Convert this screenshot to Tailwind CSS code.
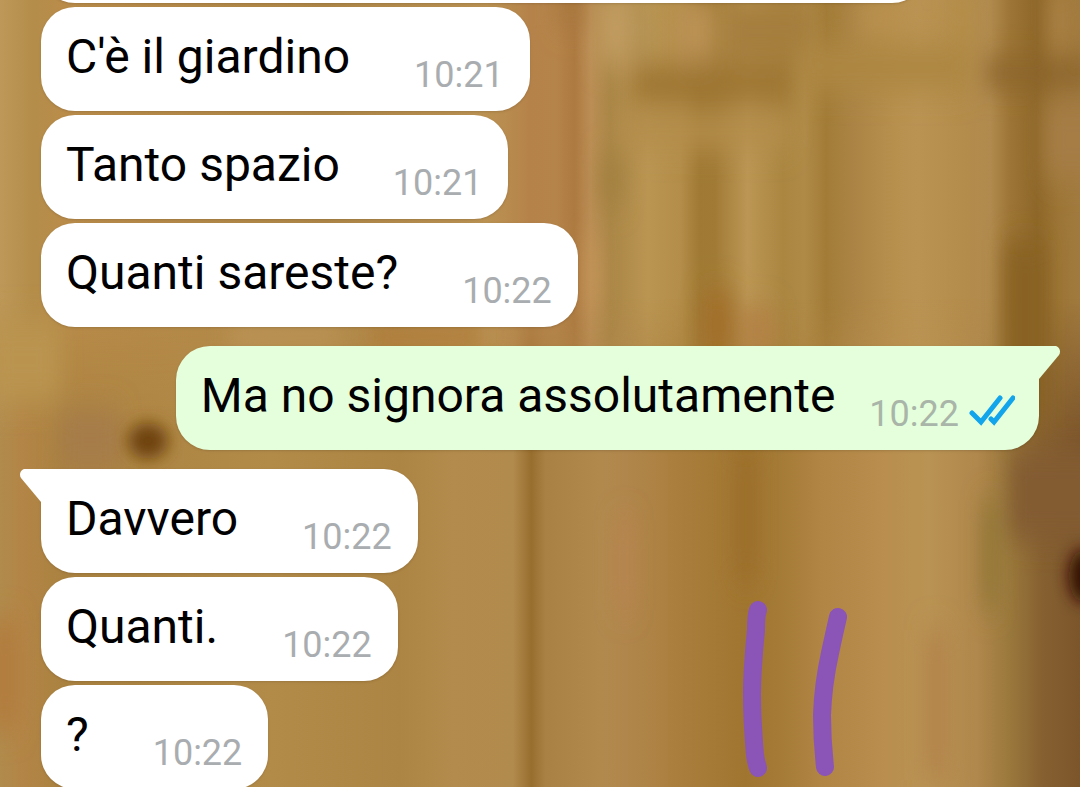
<!DOCTYPE html>
<html lang="it">
  <head>
    <meta charset="UTF-8" />
    <meta name="viewport" content="width=device-width, initial-scale=1.0" />
    <script src="https://cdn.jsdelivr.net/npm/@tailwindcss/browser@4"></script>
    <title>Chat</title>
  </head>
  <body class="bg-[#b28a48] font-[Roboto,sans-serif]">
    <main class="relative isolate h-screen overflow-hidden">
      <!-- wooden wallpaper -->
      <svg
        class="absolute inset-0 -z-10 h-full w-full"
        viewBox="0 0 1080 787"
        preserveAspectRatio="none"
        aria-hidden="true"
      >
        <defs>
          <linearGradient id="planks-top">
            <stop offset="0" stop-color="#bd9858" />
            <stop offset=".03" stop-color="#b48d4a" />
            <stop offset=".06" stop-color="#ba8c4a" />
            <stop offset=".3" stop-color="#b08848" />
            <stop offset=".45" stop-color="#bb9252" />
            <stop offset=".49" stop-color="#b5834a" />
            <stop offset=".515" stop-color="#b5844a" />
            <stop offset=".532" stop-color="#ad7a41" />
            <stop offset=".547" stop-color="#bb8e55" />
            <stop offset=".565" stop-color="#aa8646" />
            <stop offset=".6" stop-color="#ba9552" />
            <stop offset=".63" stop-color="#b38d49" />
            <stop offset=".648" stop-color="#a07a34" />
            <stop offset=".662" stop-color="#a17b36" />
            <stop offset=".692" stop-color="#bb9654" />
            <stop offset=".725" stop-color="#aa8641" />
            <stop offset=".745" stop-color="#af8a47" />
            <stop offset=".765" stop-color="#a27c37" />
            <stop offset=".79" stop-color="#ab8445" />
            <stop offset=".83" stop-color="#b8904e" />
            <stop offset=".85" stop-color="#ba9353" />
            <stop offset=".89" stop-color="#b48c4b" />
            <stop offset=".917" stop-color="#b08a4e" />
            <stop offset=".935" stop-color="#9d7536" />
            <stop offset=".96" stop-color="#8e6729" />
            <stop offset=".98" stop-color="#9c7536" />
            <stop offset="1" stop-color="#a17a3f" />
          </linearGradient>
          <linearGradient id="planks-bottom">
            <stop offset="0" stop-color="#b08b4c" />
            <stop offset=".02" stop-color="#b38546" />
            <stop offset=".06" stop-color="#aa8240" />
            <stop offset=".25" stop-color="#b38b49" />
            <stop offset=".37" stop-color="#ac8443" />
            <stop offset=".42" stop-color="#b38b4c" />
            <stop offset=".475" stop-color="#b18a4d" />
            <stop offset=".492" stop-color="#986e2e" />
            <stop offset=".505" stop-color="#a98144" />
            <stop offset=".555" stop-color="#b1894d" />
            <stop offset=".58" stop-color="#b1864c" />
            <stop offset=".62" stop-color="#ab803f" />
            <stop offset=".69" stop-color="#a07530" />
            <stop offset=".72" stop-color="#a47a36" />
            <stop offset=".76" stop-color="#b18544" />
            <stop offset=".82" stop-color="#b98e4e" />
            <stop offset=".86" stop-color="#b99353" />
            <stop offset=".905" stop-color="#b0874c" />
            <stop offset=".935" stop-color="#9a783c" />
            <stop offset=".965" stop-color="#866030" />
            <stop offset="1" stop-color="#7c552b" />
          </linearGradient>
          <linearGradient id="fade" x2="0" y2="1">
            <stop offset=".38" stop-color="#000" />
            <stop offset=".56" stop-color="#fff" />
          </linearGradient>
          <mask id="lower">
            <rect width="1080" height="787" fill="url(#fade)" />
          </mask>
          <filter id="soft" x="-10%" y="-10%" width="120%" height="120%">
            <feGaussianBlur stdDeviation="10 15" />
          </filter>
          <filter id="knot" x="-10%" y="-50%" width="120%" height="200%">
            <feGaussianBlur stdDeviation="8" />
          </filter>
        </defs>
        <rect width="1080" height="787" fill="url(#planks-top)" />
        <rect width="1080" height="787" fill="url(#planks-bottom)" mask="url(#lower)" />
        <g filter="url(#soft)">
          <rect x="555" y="-10" width="30" height="35" fill="#a8783f" />
          <rect x="598" y="-10" width="34" height="75" fill="#c19b60" />
          <rect x="635" y="0" width="15" height="60" fill="#b09152" />
          <rect x="675" y="0" width="40" height="60" fill="#bb9254" />
          <rect x="725" y="0" width="90" height="60" fill="#a57e3d" />
          <rect x="632" y="65" width="160" height="38" fill="#9d7532" />
          <rect x="620" y="115" width="170" height="32" fill="#b48d4c" />
          <rect x="860" y="5" width="40" height="25" fill="#bb9250" />
          <rect x="800" y="45" width="170" height="45" fill="#ad8743" />
          <rect x="955" y="-10" width="15" height="50" fill="#b48f49" />
          <rect x="985" y="60" width="110" height="26" fill="#8a632a" />
          <rect x="1052" y="-10" width="14" height="60" fill="#b0854c" />
          <rect x="1045" y="100" width="60" height="80" fill="#a57d44" />
          <rect x="600" y="155" width="22" height="50" fill="#a3803f" />
          <rect x="702" y="290" width="30" height="70" fill="#a26f2b" />
          <rect x="740" y="310" width="35" height="40" fill="#b38144" />
          <rect x="370" y="325" width="110" height="22" fill="#ad7836" />
          <rect x="230" y="325" width="110" height="22" fill="#be965a" />
          <rect x="588" y="240" width="10" height="70" fill="#c79759" />
          <rect x="-10" y="320" width="70" height="80" fill="#ba944f" />
          <rect x="60" y="410" width="60" height="60" fill="#a67b4a" />
          <rect x="1005" y="240" width="40" height="190" fill="#886223" />
          <rect x="982" y="500" width="16" height="110" fill="#8f7635" />
          <rect x="1010" y="450" width="90" height="90" fill="#835c31" />
          <rect x="-10" y="620" width="28" height="110" fill="#b27c3c" />
          <rect x="616" y="520" width="16" height="90" fill="#b88450" />
          <rect x="735" y="450" width="22" height="130" fill="#9b6e2a" />
          <rect x="925" y="630" width="22" height="150" fill="#b3834c" />
        </g>
        <g filter="url(#knot)">
          <ellipse cx="148" cy="441" rx="20" ry="18" fill="#6e430b" />
          <ellipse cx="1084" cy="576" rx="15" ry="27" fill="#330b00" />
        </g>
      </svg>

      <ol class="-mt-[101px] flex flex-col items-start gap-1 px-[41px] text-5xl text-black">
        <li class="h-[104px] w-[885px] max-w-full rounded-[34px] bg-white shadow-sm"></li>
        <li class="flex items-end rounded-[34px] bg-white pt-[22px] pr-[26px] pb-[14px] pl-[25px] shadow-sm">
          <p class="pb-3 leading-14">C'è il giardino</p>
          <time class="pl-16 text-4xl leading-11 text-[#a9adb0]">10:21</time>
        </li>
        <li class="flex items-end rounded-[34px] bg-white pt-[22px] pr-[26px] pb-[14px] pl-[25px] shadow-sm">
          <p class="pb-3 leading-14">Tanto spazio</p>
          <time class="pl-[53px] text-4xl leading-11 text-[#a9adb0]">10:21</time>
        </li>
        <li class="flex items-end rounded-[34px] bg-white pt-[22px] pr-[26px] pb-[14px] pl-[25px] shadow-sm">
          <p class="pb-3 leading-14">Quanti sareste?</p>
          <time class="pl-16 text-4xl leading-11 text-[#a9adb0]">10:22</time>
        </li>

        <li class="relative my-[15px] flex items-end self-end rounded-[34px] rounded-tr-none bg-[#e5ffdc] pt-[22px] pr-6 pb-[14px] pl-[25px] shadow-sm">
          <p class="pb-3 leading-14">Ma no signora assolutamente</p>
          <time class="pl-[34px] text-4xl leading-11 text-[#a9b5a8]">10:22</time>
          <svg class="mb-[9px] ml-2.5 h-8 w-[46px]" viewBox="0 0 46 32" fill="none" stroke="#12a5ec" stroke-width="5" stroke-linecap="round" role="img" aria-label="Letto">
            <path d="M3 18 12 27 31 3" stroke-linejoin="miter" />
            <path d="M22 24 25 27 44 3" />
          </svg>
          <svg class="absolute top-0 left-full -ml-px h-[34px] w-[22px]" viewBox="0 0 22 34" fill="#e5ffdc" aria-hidden="true">
            <path d="M0 0H17C21 0 23.500 5 21 9L1 33H0Z" />
          </svg>
        </li>

        <li class="relative flex items-end rounded-[34px] rounded-tl-none bg-white pt-[22px] pr-[26px] pb-[14px] pl-[25px] shadow-sm">
          <svg class="absolute top-0 right-full -mr-px h-[34px] w-[22px]" viewBox="0 0 22 34" fill="#fff" aria-hidden="true">
            <path d="M22 0H5C1 0 -1.500 5 1 9L21 33H22Z" />
          </svg>
          <p class="pb-3 leading-14">Davvero</p>
          <time class="pl-16 text-4xl leading-11 text-[#a9adb0]">10:22</time>
        </li>
        <li class="flex items-end rounded-[34px] bg-white pt-[22px] pr-[26px] pb-[14px] pl-[25px] shadow-sm">
          <p class="pb-3 leading-14">Quanti.</p>
          <time class="pl-16 text-4xl leading-11 text-[#a9adb0]">10:22</time>
        </li>
        <li class="flex items-end rounded-[34px] bg-white pt-[22px] pr-[26px] pb-[14px] pl-[25px] shadow-sm">
          <p class="pb-3 leading-14">?</p>
          <time class="pl-16 text-4xl leading-11 text-[#a9adb0]">10:22</time>
        </li>
      </ol>

      <!-- marker strokes -->
      <svg
        class="absolute right-[232px] bottom-2.5 h-[178px] w-[106px]"
        viewBox="742 599 106 178"
        fill="none"
        stroke="#8b54b7"
        stroke-width="18"
        stroke-linecap="round"
        stroke-linejoin="round"
        aria-hidden="true"
      >
        <path d="M758 610Q756 615 756 630Q752 670 752 695Q752 720 755 755Q756 762 758 768" />
        <path d="M838 617Q835 630 830 653Q823 685 822 715Q822 740 825 767" />
      </svg>
    </main>
  </body>
</html>
